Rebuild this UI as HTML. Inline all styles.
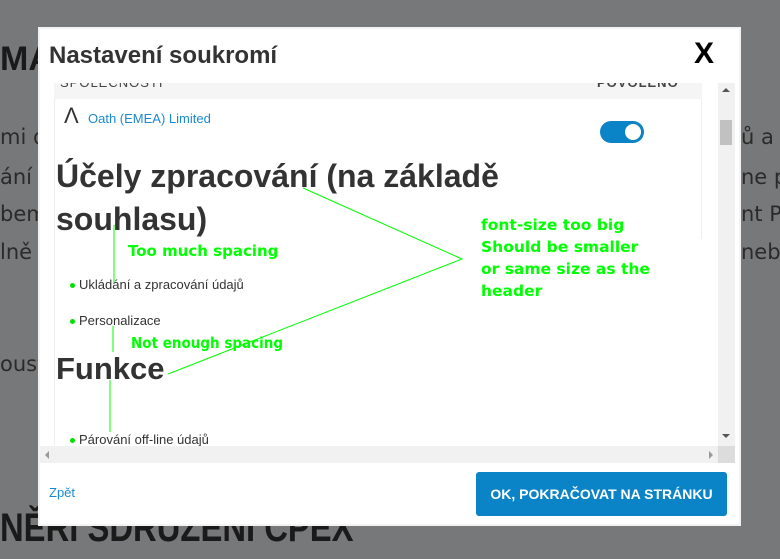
<!DOCTYPE html>
<html><head><meta charset="utf-8"><style>
*{margin:0;padding:0;box-sizing:border-box}
body{width:780px;height:559px;background:#77787a;position:relative;overflow:hidden;font-family:"Liberation Sans",sans-serif}
.a{position:absolute;white-space:nowrap}
.bg{color:#2a2a2a;font-size:21px;font-family:"DejaVu Sans",sans-serif}
.g{color:#00ff00;font-weight:bold;font-size:16px;font-family:"DejaVu Sans",sans-serif}
.li{font-size:13px;color:#333}
.dot{display:inline-block;width:5px;height:5px;border-radius:50%;background:#00e000;margin-right:4px;vertical-align:middle}
</style></head><body>
<div class="a" style="left:0;top:40px;font-size:34px;font-weight:bold;color:#1a1a1a">MA</div>
<div class="a bg" style="left:0;top:125px">mi d</div>
<div class="a bg" style="left:0;top:165px">ání p</div>
<div class="a bg" style="left:0;top:202px">bem</div>
<div class="a bg" style="left:0;top:240px">lně</div>
<div class="a bg" style="left:0;top:352px">oust</div>
<div class="a bg" style="left:741px;top:125px">ů a s</div>
<div class="a bg" style="left:741px;top:165px">ne po</div>
<div class="a bg" style="left:741px;top:202px">nt P</div>
<div class="a bg" style="left:741px;top:240px">nebo</div>
<div class="a" style="left:0;top:506px;font-size:40px;font-weight:bold;color:#1a1a1a;transform:scaleX(.82);transform-origin:left">NĚRI SDRUŽENÍ CPEX</div>

<div class="a" style="left:38px;top:27px;width:703px;height:499px;background:#fff;border:2px solid #f3f3f3"></div>
<div class="a" style="left:49px;top:42px;font-size:24px;font-weight:bold;color:#333">Nastavení soukromí</div>
<div class="a" style="left:694px;top:37px;font-size:30px;font-weight:bold;color:#000">X</div>

<div class="a" style="left:40px;top:83px;width:678px;height:363px;background:#fff;overflow:hidden">
 <div class="a" style="left:14px;top:0;width:648px;height:16px;background:#f5f5f5"></div>
 <div class="a" style="left:20px;top:-8px;font-size:13px;color:#444;letter-spacing:1px">SPOLEČNOSTI</div>
 <div class="a" style="left:557px;top:-8px;font-size:13px;color:#444;font-weight:bold;letter-spacing:1px">POVOLENO</div>
 <div class="a" style="left:14px;top:16px;width:1px;height:350px;background:#eee"></div>
 <div class="a" style="left:661px;top:16px;width:1px;height:140px;background:#eee"></div>
 <div class="a" style="left:24px;top:20px;font-size:22px;color:#333">Λ</div>
 <div class="a" style="left:48px;top:28px;font-size:13px;color:#1a8ad0">Oath (EMEA) Limited</div>
 <div class="a" style="left:560px;top:38px;width:44px;height:22px;border-radius:11px;background:#0a84c6"><div style="position:absolute;right:3px;top:3px;width:16px;height:16px;border-radius:50%;background:#fff"></div></div>
 <div class="a" style="left:16px;top:72px;font-size:32px;font-weight:bold;color:#333;line-height:43px">Účely zpracování (na základě<br>souhlasu)</div>
 <div class="a li" style="left:30px;top:194px"><span class="dot"></span>Ukládání a zpracování údajů</div>
 <div class="a li" style="left:30px;top:230px"><span class="dot"></span>Personalizace</div>
 <div class="a" style="left:16px;top:268px;font-size:31px;font-weight:bold;color:#333">Funkce</div>
 <div class="a li" style="left:30px;top:349px"><span class="dot"></span>Párování off-line údajů</div>
</div>
<div class="a" style="left:718px;top:83px;width:17px;height:363px;background:#f1f1f1"></div>
<div class="a" style="left:720px;top:120px;width:12px;height:25px;background:#c1c1c1"></div>
<div class="a" style="left:722px;top:88px;width:0;height:0;border:4px solid transparent;border-bottom-color:#555;border-top:0"></div>
<div class="a" style="left:722px;top:434px;width:0;height:0;border:4px solid transparent;border-top-color:#555;border-bottom:0"></div>
<div class="a" style="left:40px;top:446px;width:678px;height:17px;background:#f1f1f1"></div>
<div class="a" style="left:718px;top:446px;width:17px;height:17px;background:#dcdcdc"></div>
<div class="a" style="left:45px;top:451px;width:0;height:0;border:4px solid transparent;border-right-color:#999;border-left:0"></div>
<div class="a" style="left:709px;top:451px;width:0;height:0;border:4px solid transparent;border-left-color:#999;border-right:0"></div>

<div class="a" style="left:49px;top:485px;font-size:13px;color:#1a8ad0">Zpět</div>
<div class="a" style="left:476px;top:472px;width:251px;height:44px;background:#0a84c6;border-radius:3px;color:#fff;font-weight:bold;font-size:14px;text-align:center;line-height:44px">OK, POKRAČOVAT NA STRÁNKU</div>

<svg class="a" style="left:0;top:0" width="780" height="559"><g stroke="#00ff00" stroke-width="1" fill="none">
<path d="M303 188 L462 259 L168 374"/><path d="M114 225 L114 282"/><path d="M113 326 L113 352"/><path d="M110 380 L110 432"/></g></svg>
<div class="a g" style="left:481px;top:214px;line-height:22px;font-size:15.5px">font-size too big<br>Should be smaller<br>or same size as the<br>header</div>
<div class="a g" style="left:128px;top:242px;font-size:15px">Too much spacing</div>
<div class="a g" style="left:131px;top:334px;font-size:15px;transform:scaleX(.9);transform-origin:left">Not enough spacing</div>
</body></html>
